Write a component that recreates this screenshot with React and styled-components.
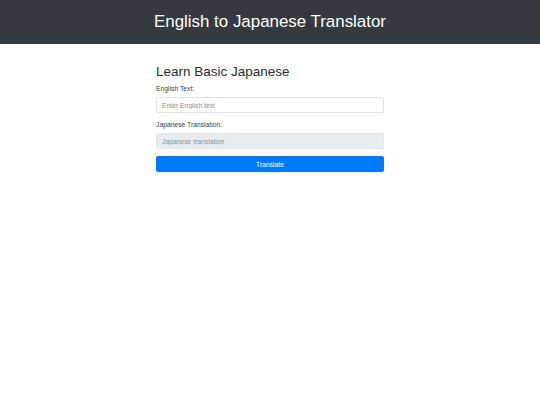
import React, { useState } from 'react'
import styled, { createGlobalStyle } from 'styled-components'

const GlobalStyle = createGlobalStyle`
  body {
    margin: 0;
    background: #fff;
    font-family: "Liberation Sans", Arial, sans-serif;
    color: #212529;
  }
`

const Header = styled.header`
  height: 44px;
  background-color: #343a40;
  display: flex;
  align-items: center;
  justify-content: center;
`

const Title = styled.h1`
  margin: 0;
  font-size: 16.9px;
  font-weight: 400;
  line-height: 1.2;
  color: #fff;
`

const Main = styled.main`
  width: 228px;
  margin: 0 auto;
  padding-top: 20px;
  display: flex;
  flex-direction: column;
`

const Heading = styled.h2`
  margin: 0 0 3.4px;
  font-size: 13.5px;
  font-weight: 400;
  line-height: 1.2;
  color: #2a2e33;
`

const Field = styled.div`
  display: flex;
  flex-direction: column;
  margin-bottom: 6.75px;
`

const Label = styled.label`
  font-size: 6.75px;
  line-height: 1.5;
  margin-bottom: 3.4px;
  color: #3a3f44;
`

const Input = styled.input`
  box-sizing: border-box;
  height: 16px;
  padding: 0 5px;
  font-family: inherit;
  font-size: 6.75px;
  color: #495057;
  background-color: ${p => (p.disabled ? '#e9ecef' : '#fff')};
  border: 1px solid ${p => (p.disabled ? '#e4e7ea' : '#e2e5e8')};
  border-radius: 1.7px;
  outline: none;

  &::placeholder {
    color: #8a9096;
  }
`

const Button = styled.button`
  box-sizing: border-box;
  height: 16px;
  padding: 0;
  font-family: inherit;
  font-size: 6.75px;
  color: #fff;
  background-color: #007bff;
  border: 1px solid #007bff;
  border-radius: 1.7px;
  cursor: pointer;
`

export default function App() {
  const [text, setText] = useState('')
  return (
    <>
      <GlobalStyle />
      <Header>
        <Title>English to Japanese Translator</Title>
      </Header>
      <Main>
        <Heading>Learn Basic Japanese</Heading>
        <Field>
          <Label>English Text:</Label>
          <Input
            placeholder="Enter English text"
            value={text}
            onChange={e => setText(e.target.value)}
          />
        </Field>
        <Field>
          <Label>Japanese Translation:</Label>
          <Input placeholder="Japanese translation" disabled />
        </Field>
        <Button>Translate</Button>
      </Main>
    </>
  )
}
